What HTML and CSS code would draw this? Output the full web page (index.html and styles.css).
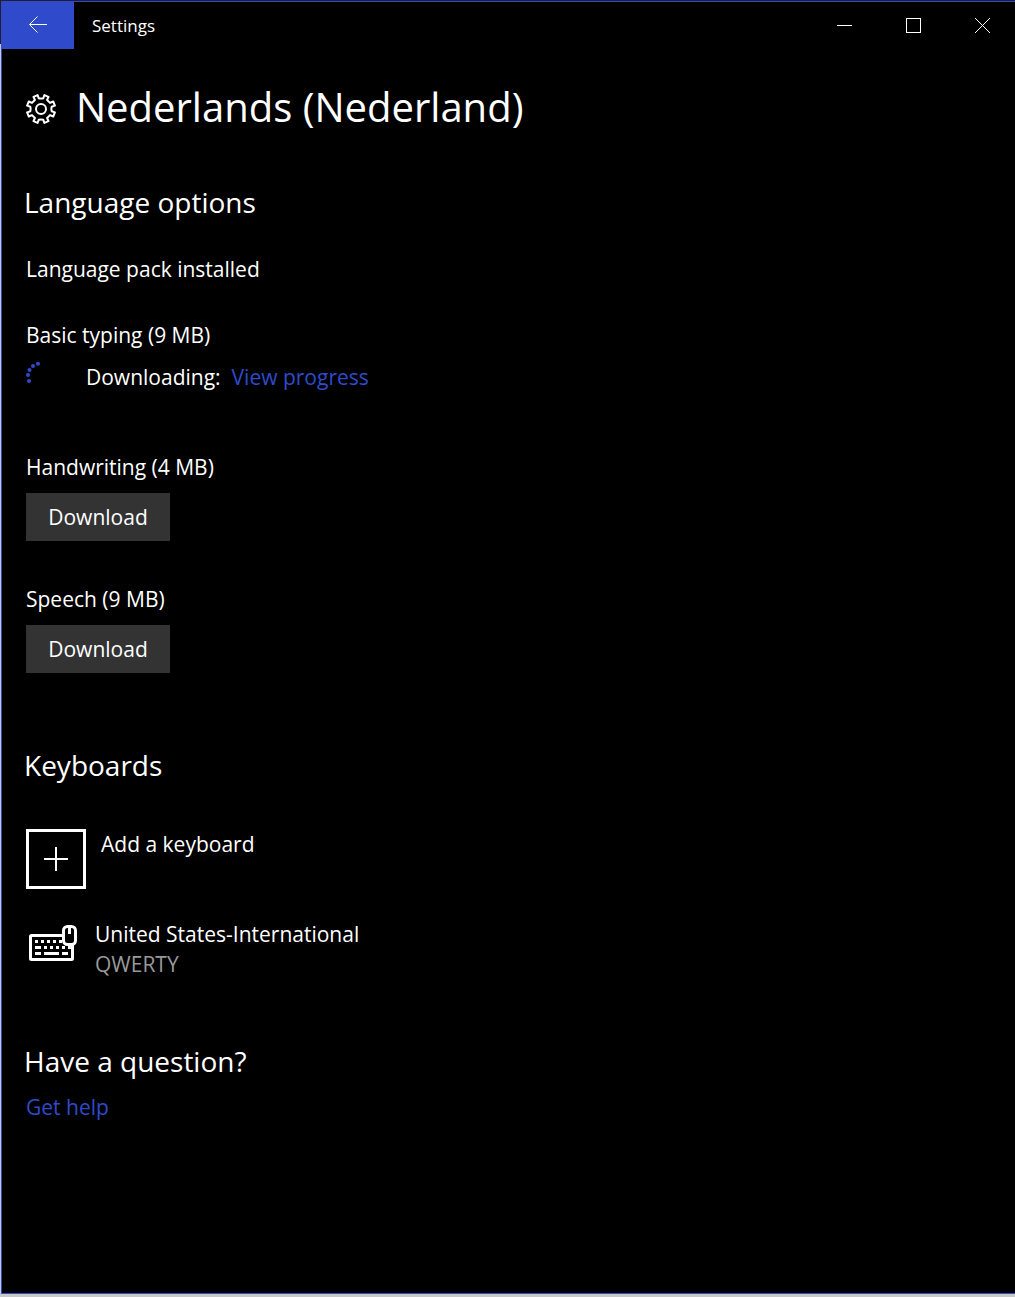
FILE: index.html
```html
<!DOCTYPE html>
<html lang="en">
<head>
    <meta charset="UTF-8">
    <meta name="viewport" content="width=device-width, initial-scale=1.0">
    <title>Settings</title>
    <link rel="stylesheet" href="styles.css">
</head>
<body>

    <div class="window">
        <header class="titlebar">
            <button class="back" aria-label="Back">
                <svg width="20" height="20" viewBox="0 0 20 20"><path d="M19 8.5H1.5M9.500 .5l-8 8 8 8"/></svg>
            </button>
            <span class="app-name">Settings</span>
            <div class="controls">
                <button class="control" aria-label="Minimize">
                    <svg width="15" height="15" viewBox="0 0 15 15" shape-rendering="crispEdges"><path d="M0 7.5h15"/></svg>
                </button>
                <button class="control" aria-label="Maximize">
                    <svg width="15" height="15" viewBox="0 0 15 15" shape-rendering="crispEdges"><path d="M.5.5h14v14H.5z"/></svg>
                </button>
                <button class="control" aria-label="Close">
                    <svg width="17" height="15" viewBox="0 0 17 15"><path d="M2 0l15 15M17 0L2 15"/></svg>
                </button>
            </div>
        </header>

        <main class="content">
            <div class="page-title">
                <svg class="gear" width="30" height="34" viewBox="0 -4 30 34">
                    <path d="M11.6 1.1L12.8 4.3Q15 4.9 17.2 4.3L18.4 1.1L22.5 2.8L21.1 6L24 8.9L27.2 7.5L28.9 11.6L25.7 12.800Q25.1 15 25.7 17.2L28.9 18.4L27.2 22.5L24 21.1L21.1 24L22.5 27.2L18.4 28.9L17.2 25.7Q15 25.1 12.8 25.7L11.6 28.9L7.5 27.2L8.9 24L6 21.1L2.8 22.5L1.1 18.4L4.3 17.2Q4.9 15 4.3 12.8L1.1 11.6L2.8 7.5L6 8.9L8.900 6L7.5 2.8Z"/>
                    <circle cx="15" cy="15" r="5"/>
                </svg>
                <h1>Nederlands (Nederland)</h1>
            </div>

            <section class="section">
                <h2>Language options</h2>
                <div class="option">
                    <p>Language pack installed</p>
                </div>
                <div class="option">
                    <p>Basic typing (9 MB)</p>
                    <div class="progress">
                        <svg class="spinner" width="24" height="24" viewBox="0 0 24 24">
                            <circle cx="12" cy="1.800" r="2"/>
                            <circle cx="7" cy="4" r="2"/>
                            <circle cx="3.5" cy="8" r="2"/>
                            <circle cx="2" cy="13" r="2"/>
                            <circle cx="3" cy="19" r="2"/>
                        </svg>
                        <p class="state">Downloading: <a href="#">View progress</a></p>
                    </div>
                </div>
                <div class="option">
                    <p>Handwriting (4 MB)</p>
                    <button class="download">Download</button>
                </div>
                <div class="option">
                    <p>Speech (9 MB)</p>
                    <button class="download">Download</button>
                </div>
            </section>

            <section class="section keyboards">
                <h2>Keyboards</h2>
                <button class="add">
                    <span class="add-box">
                        <svg width="24" height="24" viewBox="0 0 24 24"><path d="M12 0v24M0 12h24"/></svg>
                    </span>
                    <span>Add a keyboard</span>
                </button>
                <div class="keyboard">
                    <svg width="48" height="36" viewBox="0 0 48 36">
                        <rect x="1.5" y="10.5" width="42" height="24" rx="1"/>
                        <path d="M6 16.5h3m3 0h3m3 0h3m3 0h3m3 0h3m3 0h3M6 22.5h6m3 0h3m3 0h3m3 0h3m3 0h3m3 0h6M6 28.5h6m3 0h15m3 0h6"/>
                        <rect class="mouse" x="34.5" y="1.5" width="12" height="18" rx="4"/>
                        <path d="M40.5 2v7"/>
                    </svg>
                    <div>
                        <p>United States-International</p>
                        <p class="layout">QWERTY</p>
                    </div>
                </div>
            </section>

            <section class="section question">
                <h2>Have a question?</h2>
                <a class="help" href="#">Get help</a>
            </section>
        </main>
    </div>

</body>
</html>
```
FILE: styles.css
```css
* {
    box-sizing: border-box;
}

body {
    margin: 0;
    padding: 1px 0 3px 1px;
    min-height: 100vh;
    display: flex;
    background-color: #c8c8c8;
    background-image: linear-gradient(#20202c 44px, transparent 44px);
    font-family: "Open Sans", "Noto Sans", sans-serif;
    font-size: 21px;
    line-height: 30px;
    color: #fff;
}

h1, h2, p {
    margin: 0;
    font-weight: 400;
}

a {
    color: #2f4bcb;
    text-decoration: none;
}

button {
    padding: 0;
    border: none;
    background: none;
    color: inherit;
    font: inherit;
}

svg {
    display: block;
    flex-shrink: 0;
    fill: none;
    stroke: #fff;
}

.window {
    flex: 1;
    border: 1px solid #2f4bcb;
    border-right: none;
    background-color: #000;
}

.titlebar {
    display: flex;
    align-items: center;
    height: 47px;
}

.back {
    display: flex;
    align-items: center;
    justify-content: center;
    width: 72px;
    height: 47px;
    background-color: #2f4bcb;
}

.app-name {
    margin-left: 18px;
    font-size: 17px;
}

.controls {
    display: flex;
    margin-left: auto;
}

.control {
    display: flex;
    align-items: center;
    justify-content: center;
    width: 69px;
    height: 47px;
}

.control:last-child {
    width: 67px;
}

.content {
    padding: 28px 22px;
}

.page-title {
    display: flex;
    align-items: center;
    gap: 20px;
    padding-left: 2px;
}

.gear {
    stroke-width: 2;
    stroke-linejoin: round;
}

h1 {
    font-size: 40px;
    line-height: 60px;
}

h2 {
    font-size: 28px;
    line-height: 40px;
}

.section {
    margin-top: 45px;
}

.option {
    min-height: 30px;
    margin: 36px 0 0 2px;
}

h2 + .option {
    margin-top: 32px;
}

.progress {
    display: flex;
    gap: 36px;
    margin: 12px 0 60px;
}

.spinner {
    fill: #2f4bcb;
    stroke: none;
}

.state {
    display: flex;
    flex-wrap: wrap;
    column-gap: 11px;
}

.download {
    display: block;
    width: 144px;
    height: 48px;
    margin: 11px 0 43px;
    background-color: #333;
}

.keyboards {
    margin-top: 72px;
}

.add {
    display: flex;
    gap: 15px;
    margin: 44px 0 0 2px;
}

.add-box {
    display: flex;
    align-items: center;
    justify-content: center;
    width: 60px;
    height: 60px;
    border: 3px solid #fff;
}

.add-box svg {
    stroke-width: 2;
}

.keyboard {
    display: flex;
    gap: 18px;
    margin: 30px 0 0 5px;
    align-items: flex-start;
}

.keyboard svg {
    margin-top: 6px;
    stroke-width: 3;
}

.mouse {
    fill: #000;
}

.layout {
    color: #999;
}

.question {
    margin-top: 62px;
}

.help {
    display: inline-block;
    margin: 11px 0 0 2px;
}
```
